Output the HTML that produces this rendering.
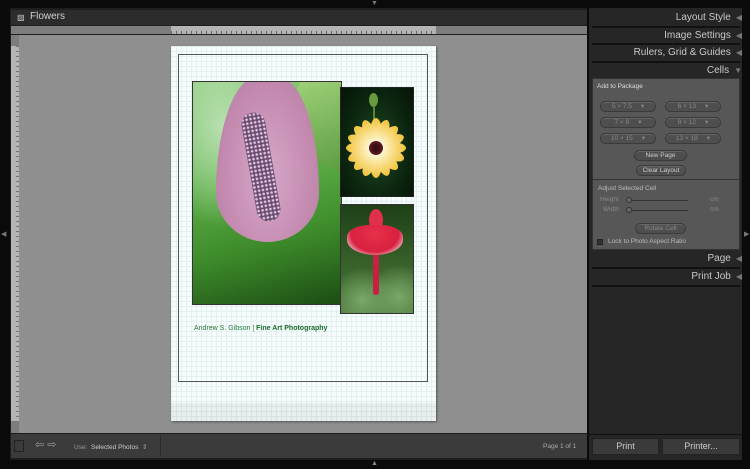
<!DOCTYPE html>
<html><head><meta charset="utf-8"><style>
*{margin:0;padding:0;box-sizing:border-box}
body{width:750px;height:469px;background:#0a0a0a;position:relative;overflow:hidden;font-family:"Liberation Sans",sans-serif}
.a{position:absolute}
.hd{position:absolute;right:8px;color:#c8c8c8;font-size:10px;text-align:right}
.hd span{color:#777;font-size:8px;margin-left:5px}
.sep{position:absolute;left:592px;width:148px;height:2px;background:#111}
.btn{position:absolute;height:11px;border-radius:6px;background:#4e4e4e;border:1px solid #3a3a3a;color:#8a8a8a;font-size:6.5px;line-height:9px;text-align:center;box-shadow:inset 0 1px 0 #666}
.grid{background-color:#f6fbfb;background-image:linear-gradient(#e3f0f0 1px,transparent 1px),linear-gradient(90deg,#e3f0f0 1px,transparent 1px);background-size:5px 5px}
.pet{position:absolute;left:0;top:0;width:12px;height:30px;margin-left:-6px;margin-top:-30px;border-radius:50% 50% 40% 40%;background:linear-gradient(#f2c23a,#fbe9a8 60%,#fff);transform-origin:6px 30px}
</style></head><body>
<div class="a" style="left:10px;top:8px;width:577px;height:452px;background:#1e1e1e"></div>
<div class="a" style="left:11px;top:10px;width:576px;height:15px;background:#2c2c2c"></div>
<div class="a" style="left:17px;top:13px;color:#ccc;font-size:8px">&#9639;</div>
<div class="a" style="left:30px;top:11px;color:#d0d0d0;font-size:10px">Flowers</div>
<div class="a" style="left:11px;top:26px;width:576px;height:8px;background:#7d7d7d"></div>
<div class="a" style="left:171px;top:26px;width:265px;height:8px;background:#b4b4b4;background-image:repeating-linear-gradient(90deg,#666 0 1px,transparent 1px 5px);background-size:5px 3px;background-repeat:repeat-x;background-position:0 5px"></div>
<div class="a" style="left:11px;top:35px;width:8px;height:398px;background:#7d7d7d"></div>
<div class="a" style="left:11px;top:46px;width:8px;height:375px;background:#b4b4b4;background-image:repeating-linear-gradient(#777 0 1px,transparent 1px 5px);background-size:3px 5px;background-repeat:repeat-y;background-position:5px 0"></div>
<div class="a" style="left:19px;top:35px;width:568px;height:398px;background:#8f8f8f"></div>
<div class="a grid" style="left:171px;top:46px;width:265px;height:375px;box-shadow:1px 1px 2px #555"></div>
<div class="a" style="left:171px;top:403px;width:265px;height:18px;background:rgba(0,0,0,0.05)"></div>
<div class="a" style="left:178px;top:54px;width:250px;height:328px;border:1px solid #555"></div>
<div class="a" style="left:192px;top:81px;width:150px;height:224px;border:1px solid #333;overflow:hidden;background:radial-gradient(ellipse at 20% 20%,#b8e0b0,transparent 40%),linear-gradient(165deg,#8fcf80,#5fb04a 40%,#3d8a2a 70%,#1c4d14)">
<div class="a" style="left:95px;top:-10px;width:80px;height:90px;background:linear-gradient(135deg,#a8d880,#5a9a40);transform:rotate(25deg);border-radius:0 0 0 60px"></div>
<div class="a" style="left:23px;top:-5px;width:103px;height:165px;border-radius:40% 40% 50% 50%/70% 70% 30% 30%;background:radial-gradient(ellipse at 50% 60%,#d6a8c8,#c48ab0 60%,#b27aa0)"></div>
<div class="a" style="left:56px;top:30px;width:24px;height:110px;border-radius:12px;background-color:#6a4a70;background-image:radial-gradient(circle,#e0c8e0 1px,transparent 1.6px);background-size:4px 4px;transform:rotate(-10deg)"></div>
</div>
<div class="a" style="left:340px;top:87px;width:74px;height:110px;border:1px solid #222;overflow:hidden;background:radial-gradient(ellipse at 50% 55%,#1e4a22,#0c260f 60%,#061408)">
<div class="a" style="left:28px;top:5px;width:9px;height:14px;border-radius:50%;background:#6a9a40"></div>
<div class="a" style="left:32px;top:18px;width:2px;height:20px;background:#5a8a30"></div>
<div class="a" style="left:35px;top:60px">
<div class="pet" style="transform:rotate(0deg)"></div><div class="pet" style="transform:rotate(22deg)"></div><div class="pet" style="transform:rotate(45deg)"></div><div class="pet" style="transform:rotate(67deg)"></div><div class="pet" style="transform:rotate(90deg)"></div><div class="pet" style="transform:rotate(112deg)"></div><div class="pet" style="transform:rotate(135deg)"></div><div class="pet" style="transform:rotate(157deg)"></div><div class="pet" style="transform:rotate(180deg)"></div><div class="pet" style="transform:rotate(202deg)"></div><div class="pet" style="transform:rotate(225deg)"></div><div class="pet" style="transform:rotate(247deg)"></div><div class="pet" style="transform:rotate(270deg)"></div><div class="pet" style="transform:rotate(292deg)"></div><div class="pet" style="transform:rotate(315deg)"></div><div class="pet" style="transform:rotate(337deg)"></div>
<div class="a" style="left:-7px;top:-7px;width:14px;height:14px;border-radius:50%;background:radial-gradient(#2a0a10,#5a1a22 70%,#fff 75%)"></div>
</div></div>
<div class="a" style="left:340px;top:204px;width:74px;height:110px;border:1px solid #333;overflow:hidden;background:radial-gradient(circle at 30% 88%,#7aa868,transparent 30%),radial-gradient(circle at 80% 85%,#7aa868,transparent 30%),linear-gradient(#1e4018,#355e28 50%,#4e7a3e)">
<div class="a" style="left:32px;top:22px;width:6px;height:68px;background:#c82040;border-radius:3px"></div>
<div class="a" style="left:28px;top:4px;width:14px;height:22px;border-radius:50%;background:#e0304a"></div>
<div class="a" style="left:6px;top:20px;width:56px;height:30px;border-radius:40% 40% 50% 50%;background:radial-gradient(ellipse at 50% 30%,#e8304a 0,#d82040 60%,#f0d8d8 85%)"></div>
</div>
<div class="a" style="left:194px;top:325px;font-size:7px;color:#2a7a3a">Andrew S. Gibson | <b style="color:#1a6a2a">Fine Art Photography</b></div>
<div class="a" style="left:11px;top:434px;width:576px;height:24px;background:#3b3b3b"></div>
<div class="a" style="left:14px;top:440px;width:10px;height:12px;border:1px solid #222"></div>
<div class="a" style="left:35px;top:438px;color:#999;font-size:11px">&#8678; &#8680;</div>
<div class="a" style="left:74px;top:443px;color:#999;font-size:6.5px;white-space:nowrap">Use:&nbsp; <span style="color:#ccc">Selected Photos</span>&nbsp; &#8661;</div>
<div class="a" style="left:543px;top:443px;color:#aaa;font-size:6.5px">Page 1 of 1</div>
<div class="a" style="left:160px;top:436px;width:1px;height:20px;background:#2a2a2a"></div>
<div class="a" style="left:589px;top:8px;width:153px;height:452px;background:#262626"></div>
<div class="hd" style="top:12px">Layout Style<span>◀</span></div>
<div class="sep" style="top:26px"></div>
<div class="hd" style="top:30px">Image Settings<span>◀</span></div>
<div class="sep" style="top:43px"></div>
<div class="hd" style="top:47px">Rulers, Grid &amp; Guides<span>◀</span></div>
<div class="sep" style="top:61px"></div>
<div class="hd" style="top:65px">Cells<span>▼</span></div>
<div class="a" style="left:592px;top:78px;width:148px;height:172px;background:#575757;border:1px solid #333"></div>
<div class="a" style="left:597px;top:83px;color:#ddd;font-size:6.5px">Add to Package</div>
<div class="btn" style="left:600px;top:101px;width:56px">5 × 7.5 &nbsp; &nbsp; ▾</div>
<div class="btn" style="left:665px;top:101px;width:56px">6 × 13 &nbsp; &nbsp; ▾</div>
<div class="btn" style="left:600px;top:117px;width:56px">7 × 9 &nbsp; &nbsp; ▾</div>
<div class="btn" style="left:665px;top:117px;width:56px">8 × 12 &nbsp; &nbsp; ▾</div>
<div class="btn" style="left:600px;top:133px;width:56px">10 × 15 &nbsp; &nbsp; ▾</div>
<div class="btn" style="left:665px;top:133px;width:56px">13 × 18 &nbsp; &nbsp; ▾</div>
<div class="btn" style="left:634px;top:150px;width:53px;color:#ccc">New Page</div>
<div class="btn" style="left:636px;top:165px;width:50px;color:#ccc;background:#505050">Clear Layout</div>
<div class="a" style="left:593px;top:179px;width:146px;height:1px;background:#333"></div>
<div class="a" style="left:598px;top:185px;color:#bbb;font-size:6.5px">Adjust Selected Cell</div>
<div class="a" style="left:600px;top:196px;color:#888;font-size:6.5px">Height</div>
<div class="a" style="left:603px;top:206px;color:#888;font-size:6.5px">Width</div>
<div class="a" style="left:626px;top:200px;width:62px;height:1px;background:#333"></div>
<div class="a" style="left:626px;top:210px;width:62px;height:1px;background:#333"></div>
<div class="a" style="left:626px;top:197px;width:6px;height:6px;border-radius:3px;border:1px solid #333;background:#666"></div>
<div class="a" style="left:626px;top:207px;width:6px;height:6px;border-radius:3px;border:1px solid #333;background:#666"></div>
<div class="a" style="left:710px;top:196px;color:#888;font-size:6.5px">cm</div>
<div class="a" style="left:710px;top:206px;color:#888;font-size:6.5px">cm</div>
<div class="btn" style="left:635px;top:223px;width:51px">Rotate Cell</div>
<div class="a" style="left:597px;top:239px;width:6px;height:6px;background:#333;border:1px solid #222"></div>
<div class="a" style="left:608px;top:238px;color:#bbb;font-size:6.5px">Lock to Photo Aspect Ratio</div>
<div class="hd" style="top:253px">Page<span>◀</span></div>
<div class="sep" style="top:267px"></div>
<div class="hd" style="top:271px">Print Job<span>◀</span></div>
<div class="sep" style="top:285px"></div>
<div class="a" style="left:589px;top:434px;width:153px;height:1px;background:#111"></div>
<div class="a" style="left:592px;top:438px;width:67px;height:17px;background:#3a3a3a;border:1px solid #222;color:#ccc;font-size:9px;text-align:center;line-height:15px">Print</div>
<div class="a" style="left:662px;top:438px;width:78px;height:17px;background:#3a3a3a;border:1px solid #222;color:#ccc;font-size:9px;text-align:center;line-height:15px">Printer...</div>
<div class="a" style="left:744px;top:230px;color:#777;font-size:7px">▶</div>
<div class="a" style="left:1px;top:230px;color:#777;font-size:7px">◀</div>
<div class="a" style="left:371px;top:0px;color:#777;font-size:7px">▼</div>
<div class="a" style="left:371px;top:460px;color:#888;font-size:7px">▲</div>
</body></html>
